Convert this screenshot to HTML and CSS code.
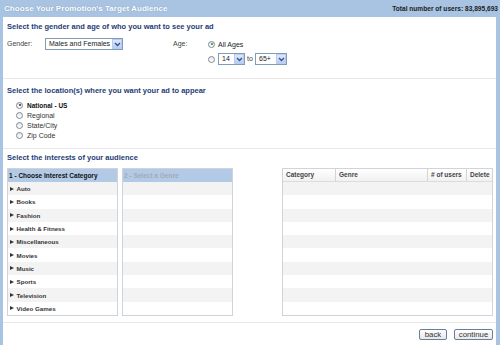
FILE: index.html
```html
<!DOCTYPE html>
<html lang="en">
<head>
    <meta charset="UTF-8">
    <title>Choose Your Promotion's Target Audience</title>
    <link rel="stylesheet" href="styles.css">
</head>
<body>
    <div class="topbar">
        <span class="title">Choose Your Promotion's Target Audience</span>
        <span class="total">Total number of users: 83,895,693</span>
    </div>

    <div class="panel">
        <div class="section demo">
            <h3>Select the gender and age of who you want to see your ad</h3>
            <div class="demo-row">
                <span class="lbl lbl-gender">Gender:</span>
                <div class="select sel-gender">
                    <span class="sel-text">Males and Females</span>
                    <span class="arrow"><svg width="7" height="5" viewBox="0 0 7 5"><path d="M1 1 L3.5 3.5 L6 1" fill="none" stroke="#3b5288" stroke-width="1.4"/></svg></span>
                </div>
                <span class="lbl lbl-age">Age:</span>
                <div class="age-opts">
                    <div class="opt">
                        <span class="radio on green"></span>
                        <span class="opt-text">All Ages</span>
                    </div>
                    <div class="opt">
                        <span class="radio"></span>
                        <div class="select sel-min">
                            <span class="sel-text">14</span>
                            <span class="arrow"><svg width="7" height="5" viewBox="0 0 7 5"><path d="M1 1 L3.5 3.5 L6 1" fill="none" stroke="#3b5288" stroke-width="1.4"/></svg></span>
                        </div>
                        <span class="to">to</span>
                        <div class="select sel-max">
                            <span class="sel-text">65+</span>
                            <span class="arrow"><svg width="7" height="5" viewBox="0 0 7 5"><path d="M1 1 L3.5 3.5 L6 1" fill="none" stroke="#3b5288" stroke-width="1.4"/></svg></span>
                        </div>
                    </div>
                </div>
            </div>
        </div>

        <div class="section location">
            <h3>Select the location(s) where you want your ad to appear</h3>
            <ul class="loc-list">
                <li class="bold"><span class="radio on"></span>National - US</li>
                <li><span class="radio"></span>Regional</li>
                <li><span class="radio"></span>State/City</li>
                <li><span class="radio"></span>Zip Code</li>
            </ul>
        </div>

        <div class="section interests">
            <h3>Select the interests of your audience</h3>
            <div class="lists">
                <div class="box box-cat">
                    <div class="box-head">1 - Choose Interest Category</div>
                    <div class="row"><span class="tri"></span>Auto</div>
                    <div class="row"><span class="tri"></span>Books</div>
                    <div class="row"><span class="tri"></span>Fashion</div>
                    <div class="row"><span class="tri"></span>Health &amp; Fitness</div>
                    <div class="row"><span class="tri"></span>Miscellaneous</div>
                    <div class="row"><span class="tri"></span>Movies</div>
                    <div class="row"><span class="tri"></span>Music</div>
                    <div class="row"><span class="tri"></span>Sports</div>
                    <div class="row"><span class="tri"></span>Television</div>
                    <div class="row"><span class="tri"></span>Video Games</div>
                </div>
                <div class="box box-genre">
                    <div class="box-head muted">2 - Select a Genre</div>
                    <div class="row"></div>
                    <div class="row"></div>
                    <div class="row"></div>
                    <div class="row"></div>
                    <div class="row"></div>
                    <div class="row"></div>
                    <div class="row"></div>
                    <div class="row"></div>
                    <div class="row"></div>
                    <div class="row"></div>
                </div>
                <div class="box box-sel">
                    <div class="sel-head">
                        <span>Category</span>
                        <span>Genre</span>
                        <span># of users</span>
                        <span>Delete</span>
                    </div>
                    <div class="row"></div>
                    <div class="row"></div>
                    <div class="row"></div>
                    <div class="row"></div>
                    <div class="row"></div>
                    <div class="row"></div>
                    <div class="row"></div>
                    <div class="row"></div>
                    <div class="row"></div>
                    <div class="row"></div>
                </div>
            </div>
        </div>

        <div class="actions">
            <button class="btn btn-back">back</button>
            <button class="btn btn-continue">continue</button>
        </div>
    </div>
</body>
</html>
```

FILE: styles.css
```css
body {
    margin: 0;
    font-family: "Liberation Sans", Arial, sans-serif;
    font-size: 7px;
    color: #333;
    background-color: #fff;
}

/* top blue bar */
.topbar {
    display: flex;
    justify-content: space-between;
    align-items: center;
    height: 17px;
    padding: 0 2px 0 4px;
    background-color: #a8c4e2;
}

.title {
    font-size: 8.1px;
    font-weight: bold;
    color: #fff;
    text-shadow: 0 0 1px rgba(60, 90, 130, 0.5);
}

.total {
    font-size: 6.6px;
    font-weight: bold;
    color: #1d1d1d;
}

.panel {
    border-left: 3px solid #a8c4e2;
    border-right: 4px solid #a8c4e2;
    min-height: 328px;
}

.section {
    padding: 0 3px 0 4px;
    border-bottom: 1px solid #e8e8e8;
}

.section h3 {
    margin: 0;
    font-size: 7.5px;
    line-height: 10px;
    font-weight: bold;
    color: #1f3c75;
}

/* gender / age */
.demo {
    padding-top: 5px;
    padding-bottom: 13px;
}

.demo-row {
    display: flex;
    align-items: flex-start;
    margin-top: 6px;
}

.lbl {
    line-height: 12px;
    color: #444;
}

.lbl-gender {
    width: 38px;
}

.lbl-age {
    width: 35px;
    margin-left: 50px;
}

.select {
    display: flex;
    align-items: stretch;
    height: 12px;
    box-sizing: border-box;
    border: 1px solid #7f9db9;
    background-color: #fff;
}

.select .sel-text {
    flex-grow: 1;
    padding-left: 3px;
    line-height: 10px;
    color: #222;
}

.select .arrow {
    display: flex;
    align-items: center;
    justify-content: center;
    width: 10px;
    margin: 0;
    border: 1px solid #b9cdf2;
    box-sizing: border-box;
    background: linear-gradient(#dde8fd, #b8cdf5);
}

.sel-gender {
    width: 78px;
}

.sel-min {
    width: 27px;
}

.sel-max {
    width: 32px;
}

.to {
    width: 10px;
    line-height: 12px;
    text-align: center;
    color: #444;
}

.age-opts {
    display: flex;
    flex-direction: column;
    gap: 3px;
}

.opt {
    display: flex;
    align-items: center;
    height: 12px;
}

.opt .radio {
    margin-right: 3px;
}

.opt-text {
    color: #222;
}

/* radio buttons */
.radio {
    display: inline-block;
    position: relative;
    width: 7px;
    height: 7px;
    box-sizing: border-box;
    border: 1px solid #7d8b99;
    border-radius: 50%;
    background: linear-gradient(#e6e6e6, #fff);
}

.radio.on::after {
    content: "";
    position: absolute;
    left: 1.5px;
    top: 1.5px;
    width: 2px;
    height: 2px;
    border-radius: 50%;
    background-color: #333;
}

.radio.green::after {
    background-color: #2e8a2e;
}

/* location */
.location {
    padding-top: 7px;
    padding-bottom: 8px;
}

.loc-list {
    list-style: none;
    margin: 4px 0 0 0;
    padding: 0 0 0 9px;
}

.loc-list li {
    display: flex;
    align-items: center;
    height: 10px;
    color: #333;
}

.loc-list li.bold {
    font-weight: bold;
    font-size: 6.5px;
    color: #111;
}

.loc-list .radio {
    margin-right: 4px;
}

/* interests */
.interests {
    padding-top: 4px;
    padding-bottom: 6px;
}

.lists {
    display: flex;
    margin-top: 5px;
}

.box {
    border: 1px solid #cfd4da;
    background-color: #fff;
}

.box-cat,
.box-genre {
    width: 111px;
    box-sizing: border-box;
}

.box-genre {
    margin-left: 4px;
}

.box-sel {
    width: 211px;
    box-sizing: border-box;
    margin-left: auto;
}

.box-head {
    height: 13px;
    line-height: 13px;
    padding-left: 1px;
    background-color: #b3cae6;
    font-size: 6.5px;
    font-weight: bold;
    color: #111;
}

.box-head.muted {
    color: #a2aab4;
}

.row {
    display: flex;
    align-items: center;
    height: 13.3px;
    padding-left: 1.5px;
    font-size: 6.2px;
    font-weight: bold;
    color: #333;
}

.row:nth-child(even) {
    background-color: #f3f3f3;
}

.tri {
    width: 0;
    height: 0;
    margin-right: 3px;
    border-top: 2.5px solid transparent;
    border-bottom: 2.5px solid transparent;
    border-left: 4px solid #333;
}

.sel-head {
    display: grid;
    grid-template-columns: 52px 92px 39px 26px;
    height: 13px;
    border-bottom: 1px solid #dcdcdc;
    box-sizing: border-box;
    background: linear-gradient(#fff, #f1f1f1);
}

.sel-head span {
    padding-left: 3px;
    line-height: 12px;
    font-size: 6.5px;
    font-weight: bold;
    color: #444;
}

.sel-head span + span {
    border-left: 1px solid #d4d4d4;
}

/* buttons */
.actions {
    display: flex;
    justify-content: flex-end;
    gap: 7px;
    padding: 6px 3px 0 0;
}

.btn {
    height: 11px;
    padding: 0;
    border: 1px solid #65809f;
    border-radius: 2px;
    background: linear-gradient(#fff, #e8e8e8);
    font-family: "Liberation Sans", Arial, sans-serif;
    font-size: 7.8px;
    line-height: 9px;
    color: #333;
}

.btn-back {
    width: 28px;
}

.btn-continue {
    width: 39px;
}
```
